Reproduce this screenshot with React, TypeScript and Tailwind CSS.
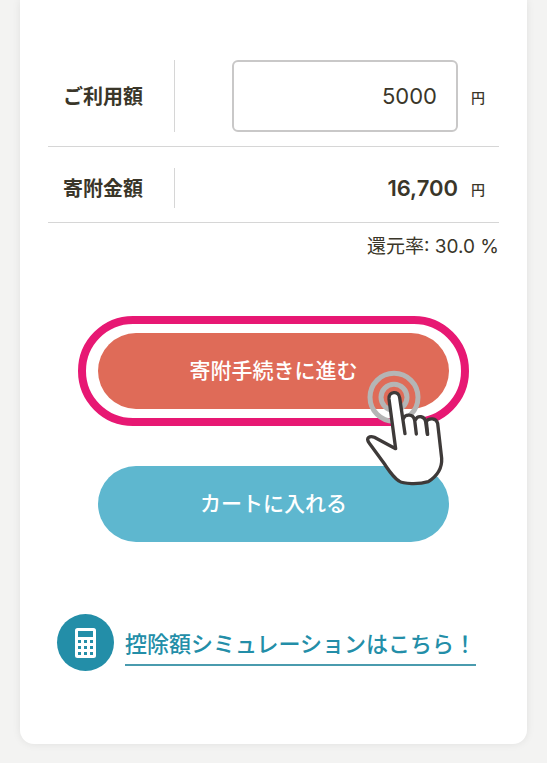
import { useState } from 'react'

const SANS = "font-['Noto_Sans_CJK_JP',sans-serif]"
const DIGITS = "font-['Inter','Noto_Sans_CJK_JP',sans-serif]"

function CalculatorIcon() {
  const keys = [0, 1, 2].flatMap((r) => [0, 1, 2].map((c) => ({ x: 3 + c * 6, y: 12 + r * 6 })))
  return (
    <svg viewBox="0 0 21 30" className="h-[30px] w-[21px]" aria-hidden="true">
      <rect width="21" height="30" rx="2.5" fill="#fff" />
      <rect x="3" y="3" width="15" height="6" fill="#238ea8" />
      {keys.map((k) => (
        <rect key={`${k.x}-${k.y}`} x={k.x} y={k.y} width="3" height="3" fill="#238ea8" />
      ))}
    </svg>
  )
}

function TapPointer() {
  return (
    <svg
      viewBox="0 0 360 450"
      className="pointer-events-none absolute -right-[9px] top-[26px] z-10 h-[150px] w-[120px]"
      aria-hidden="true"
      fill="none"
    >
      <circle cx="132" cy="142" r="72" stroke="#b5b5b5" strokeWidth="15" />
      <circle cx="132" cy="142" r="39" stroke="#b5b5b5" strokeWidth="15" />
      <path
        d="M137 296 L117 147 C115 123 146 121 149 143 L158 207 C163 192 190 190 194 210 C202 195 224 197 228 216 C236 202 260 205 263 220 L275 325 C277 362 255 382 235 395 C205 404 160 402 147 393 C128 381 114 357 102 340 L58 280 C46 264 62 256 73 262 Z"
        fill="#fff"
      />
      <path
        d="M165 251 L149 143 C146 121 115 123 117 147 L137 296 L73 262 C59 256 46 264 58 280 L102 340 C114 357 128 381 147 393 C160 402 205 404 235 395 C255 382 277 362 275 325 L263 220 C259 204 237 203 229 214 L233 253"
        stroke="#3e3a39"
        strokeWidth="10"
        strokeLinecap="round"
        strokeLinejoin="round"
      />
      <path
        d="M160 206 C165 192 190 190 194 211 L199 252 M196 210 C203 195 224 197 227 216 L232 253"
        stroke="#3e3a39"
        strokeWidth="10"
        strokeLinecap="round"
      />
    </svg>
  )
}

export default function App() {
  const [amount, setAmount] = useState('5000')

  return (
    <div className={`${SANS} min-h-screen bg-[#f3f3f2] px-5 pb-5 text-[#3a3629]`}>
      <main className="rounded-b-[14px] bg-white px-7 pt-[60px] pb-[73px] shadow-[0_0_8px_rgba(0,0,0,0.08)]">
        <form onSubmit={(e) => e.preventDefault()}>
          <div className="flex items-stretch border-b border-[#d6d6d6] pb-[14px]">
            <label
              htmlFor="amount"
              className="flex w-[127px] shrink-0 items-center border-r border-[#d6d6d6] pl-[15px] text-xl font-bold"
            >
              ご利用額
            </label>
            <div className="flex flex-1 items-center justify-end gap-[13px] pr-[14px]">
              <input
                id="amount"
                type="text"
                inputMode="numeric"
                value={amount}
                onChange={(e) => setAmount(e.target.value)}
                className={`${DIGITS} h-[72px] w-[226px] min-w-0 rounded-md border-2 border-[#c9c8c8] bg-white pr-[19px] text-right text-[22px]`}
              />
              <span className="pt-0.5 text-sm font-medium">円</span>
            </div>
          </div>

          <div className="flex items-stretch border-b border-[#d6d6d6] pt-[21px] pb-[14px]">
            <div className="flex h-10 w-[127px] shrink-0 items-center border-r border-[#d6d6d6] pl-[15px] text-xl font-bold">
              寄附金額
            </div>
            <div className="flex flex-1 items-center justify-end gap-[13px] pr-[14px]">
              <output htmlFor="amount" className={`${DIGITS} text-[22px] font-semibold`}>
                16,700
              </output>
              <span className="pt-0.5 text-sm font-medium">円</span>
            </div>
          </div>

          <p className="mt-2 text-right text-[19px] leading-7">
            還元率<span className={DIGITS}>: 30.0 %</span>
          </p>

          <div className="relative mx-[30px] mt-[55px] rounded-full border-8 border-[#e71873] px-3 py-[9px]">
            <button
              type="submit"
              className="h-[76px] w-full rounded-full bg-[#df6b58] pb-0.5 text-[21px] font-medium text-white"
            >
              寄附手続きに進む
            </button>
            <TapPointer />
          </div>

          <div className="mx-[50px] mt-10">
            <button
              type="button"
              className="h-[76px] w-full rounded-full bg-[#5eb7cf] pb-0.5 text-[21px] font-medium text-white"
            >
              カートに入れる
            </button>
          </div>
        </form>

        <a href="#simulation" className="mt-[72px] ml-[9px] flex items-center gap-[11px] text-[#238ea8]">
          <span className="flex size-[57px] shrink-0 items-center justify-center rounded-full bg-[#238ea8]">
            <CalculatorIcon />
          </span>
          <span className="border-b-2 border-[#4a9bae] pt-2 pb-[7px] text-[22px] leading-[30px] font-medium whitespace-nowrap">
            控除額シミュレーションはこちら！
          </span>
        </a>
      </main>
    </div>
  )
}
